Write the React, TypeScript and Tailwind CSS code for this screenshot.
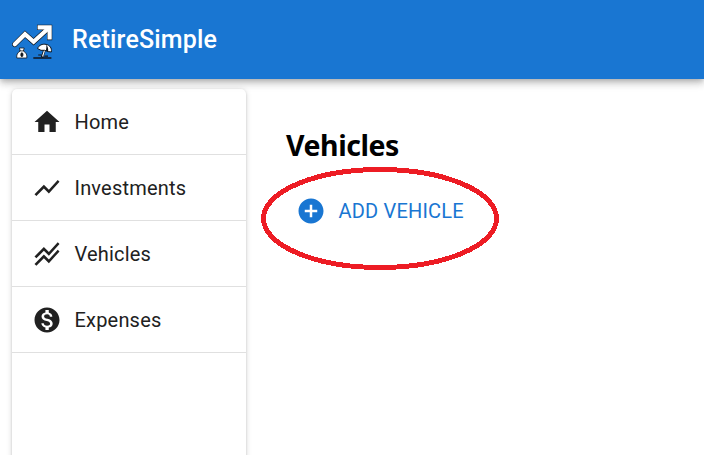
import React from "react";
import {
  MdAddCircle,
  MdHome,
  MdMonetizationOn,
  MdShowChart,
  MdStackedLineChart,
} from "react-icons/md";
import type { IconType } from "react-icons";

const items: { label: string; icon: IconType }[] = [
  { label: "Home", icon: MdHome },
  { label: "Investments", icon: MdShowChart },
  { label: "Vehicles", icon: MdStackedLineChart },
  { label: "Expenses", icon: MdMonetizationOn },
];

function Logo() {
  return (
    <svg width="44" height="38" viewBox="0 0 44 38" fill="none" className="block shrink-0">
      <g strokeLinecap="round" strokeLinejoin="miter">
        <path d="M3.8 21.3 L14 11.2 L22.6 18.8 L37.5 5.2" stroke="#10151c" strokeWidth="5.4" />
        <path d="M26 4.4 H38.6 V17.2" stroke="#10151c" strokeWidth="5.2" strokeLinecap="butt" />
        <path d="M3.8 21.3 L14 11.2 L22.6 18.8 L37.5 5.2" stroke="#fff" strokeWidth="4.2" />
        <path d="M26.6 4.4 H38.6 V16.6" stroke="#fff" strokeWidth="4.2" strokeLinecap="butt" />
      </g>
      <g stroke="#10151c" strokeWidth="0.8">
        <path d="M9.2 28 L8.4 25 H13.2 L12.4 28 C15.4 29.8 16.2 32 15.8 35 H5.8 C5.4 32 6.2 29.8 9.2 28Z" fill="#fff" />
        <path d="M8.8 27.9 H12.8" />
        <ellipse cx="10.9" cy="31.7" rx="1.1" ry="2" fill="#10151c" />
      </g>
      <path d="M22.3 35 H40.4" stroke="#10151c" strokeWidth="1.5" />
      <path d="M34 25.5 L31 34.5" stroke="#10151c" strokeWidth="2.5" />
      <path d="M33.9 26 L31.6 33.5" stroke="#fff" strokeWidth="1.1" />
      <path
        d="M26.6 25.6 C27.6 22.2 31.5 20.6 35.2 21.4 C38.8 22.2 41 25 40.3 29 L37.2 28.6 L33.7 27.3 L30 27.3Z"
        fill="#fff"
        stroke="#10151c"
        strokeWidth="1"
        strokeLinejoin="round"
      />
      <path d="M35 21.6 C36.6 23 37.4 25.4 37.2 28.5 L34.8 27.7 C35.5 25.3 35.6 23.2 35 21.6Z" fill="#10151c" />
      <path d="M30.6 32 H27.2 M33.2 33.2 H37" stroke="#10151c" strokeWidth="1.2" />
    </svg>
  );
}

export default function App() {
  return (
    <div className="relative flex h-[455px] w-[704px] flex-col overflow-hidden bg-white font-[Roboto,sans-serif]">
      <header className="z-10 flex h-[79px] shrink-0 items-center bg-[#1976d2] pl-[11px] text-white shadow-[0_2.5px_5px_-1.25px_rgba(0,0,0,0.2),0_5px_6.25px_0_rgba(0,0,0,0.14),0_1.25px_12.5px_0_rgba(0,0,0,0.12)]">
        <div className="pt-[5px]">
          <Logo />
        </div>
        <h1 className="ml-[17px] text-[25px] leading-[40px] font-medium tracking-[0.19px]">RetireSimple</h1>
      </header>
      <div className="flex flex-1 pt-[10px] pl-3">
        <nav className="h-[400px] w-[234px] shrink-0 rounded-[5px] bg-white shadow-[0_2.5px_1.25px_-1.25px_rgba(0,0,0,0.2),0_1.25px_2.5px_0_rgba(0,0,0,0.16),0_1.25px_6.25px_0_rgba(0,0,0,0.14)]">
          {items.map(({ label, icon: Icon }) => (
            <a key={label} className="flex h-[66px] items-center border-b border-[#e0e0e0] pl-5 text-[#212121]">
              <Icon className="size-[30px]" />
              <span className="ml-[12.5px] text-[20px] leading-[30px] tracking-[0.19px]">{label}</span>
            </a>
          ))}
        </nav>
        <main className="flex flex-col items-start pt-[36px] pl-10">
          <h2 className="font-['Noto_Sans',sans-serif] text-[28.5px] leading-[40px] font-bold tracking-[-0.45px] text-black">
            Vehicles
          </h2>
          <button className="mt-[31px] ml-[10px] flex items-center text-[#1976d2]">
            <MdAddCircle className="size-[30px]" />
            <span className="ml-[12.5px] text-[20px] leading-[30px] tracking-[0.19px]">ADD VEHICLE</span>
          </button>
        </main>
      </div>
      <svg
        className="pointer-events-none absolute top-[167px] left-[261px] z-20"
        width="239"
        height="104"
        viewBox="0 0 239 104"
        fill="none"
        shapeRendering="crispEdges"
      >
        <ellipse cx="119" cy="51.5" rx="116.5" ry="49" stroke="#ed1c24" strokeWidth="5" />
      </svg>
    </div>
  );
}
